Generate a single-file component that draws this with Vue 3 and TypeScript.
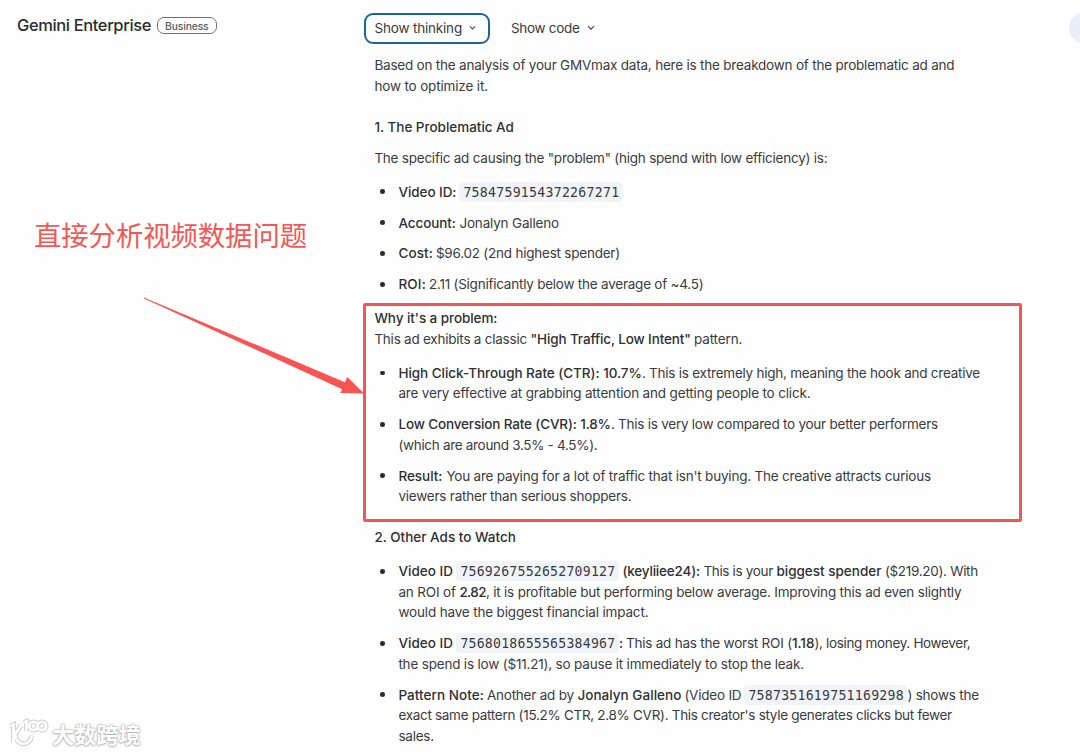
<script setup lang="ts">
import type { Directive } from 'vue'

type Kind = 'text' | 'bold' | 'code'
interface Run { t: string; from: number; to: number; k: Kind }
type Line = Run[]
interface Block { kind: 'para' | 'head' | 'list'; items: Line[][] }

// Runs are placed along the line by their start and end, measured from the column's edge.
const r = (t: string, from: number, to: number, k: Kind = 'text'): Run => ({ t, from, to, k })
const b = (t: string, from: number, to: number): Run => r(t, from, to, 'bold')
const c = (t: string, from: number, to: number): Run => r(t, from, to, 'code')

const gap = (line: Line, i: number, indent: number): string =>
  `${line[i].from - (i === 0 ? indent : line[i - 1].to)}px`

// Tracks the letters of a run so that it fills its measure.
const vFit: Directive<HTMLElement, number> = {
  mounted(el, binding) {
    el.style.letterSpacing = '0px'
    const range = document.createRange()
    range.selectNodeContents(el)
    const natural = range.getBoundingClientRect().width
    const count = (el.textContent ?? '').length
    el.style.letterSpacing = `${(binding.value - natural) / count}px`
  },
}

const blocks: Block[] = [
  { kind: 'para', items: [[
    [r('Based on the analysis of your GMVmax data, here is the breakdown of the problematic ad and', 374, 954)],
    [r('how to optimize it.', 374, 487.5)],
  ]] },
  { kind: 'head', items: [[[b('1. The Problematic Ad', 374, 513.5)]]] },
  { kind: 'para', items: [[[r('The specific ad causing the "problem" (high spend with low efficiency) is:', 374, 827)]]] },
  { kind: 'list', items: [
    [[b('Video ID:', 398, 456), c('7584759154372267271', 459, 622.5)]],
    [[b('Account:', 398, 455.5), r('Jonalyn Galleno', 459, 558.5)]],
    [[b('Cost:', 398, 432.5), r('$96.02 (2nd highest spender)', 435.5, 619.5)]],
    [[b('ROI:', 398, 425.5), r('2.11 (Significantly below the average of ~4.5)', 428.5, 703)]],
  ] },
  { kind: 'para', items: [[
    [b("Why it's a problem:", 374, 497)],
    [r('This ad exhibits a classic', 374, 526.5), b('"High Traffic, Low Intent"', 530, 690.5), r('pattern.', 693.5, 742)],
  ]] },
  { kind: 'list', items: [
    [
      [b('High Click-Through Rate (CTR): 10.7%', 398, 641.5), r('. This is extremely high, meaning the hook and creative', 641.5, 979.5)],
      [r('are very effective at grabbing attention and getting people to click.', 398, 810)],
    ],
    [
      [b('Low Conversion Rate (CVR): 1.8%', 398, 610.5), r('. This is very low compared to your better performers', 610.5, 937.5)],
      [r('(which are around 3.5% - 4.5%).', 398, 597)],
    ],
    [
      [b('Result:', 398, 442), r("You are paying for a lot of traffic that isn't buying. The creative attracts curious", 446, 930.5)],
      [r('viewers rather than serious shoppers.', 398, 631)],
    ],
  ] },
  { kind: 'head', items: [[[b('2. Other Ads to Watch', 374, 515.5)]]] },
  { kind: 'list', items: [
    [
      [b('Video ID', 398, 452.5), c('7569267552652709127', 456, 618.5), b('(keyliiee24):', 622, 699.5), r('This is your', 703, 772.5), b('biggest spender', 776, 881), r('($219.20). With', 884.5, 977.5)],
      [r('an ROI of', 398, 455.5), b('2.82', 459, 485.5), r(', it is profitable but performing below average. Improving this ad even slightly', 485.5, 961)],
      [r('would have the biggest financial impact.', 398, 648)],
    ],
    [
      [b('Video ID', 398, 452.5), c('7568018655565384967', 456, 618.5), b(':', 618.5, 622.5), r('This ad has the worst ROI (', 625.5, 791.5), b('1.18', 791.5, 814), r('), losing money. However,', 814, 970)],
      [r('the spend is low ($11.21), so pause it immediately to stop the leak.', 398, 803.5)],
    ],
    [
      [b('Pattern Note:', 398, 483.5), r('Another ad by', 486.5, 573.5), b('Jonalyn Galleno', 577, 681), r('(Video ID', 684, 741), c('7587351619751169298', 744, 907), r(') shows the', 907, 978.5)],
      [r("exact same pattern (15.2% CTR, 2.8% CVR). This creator's style generates clicks but fewer", 398, 951.5)],
      [r('sales.', 398, 433.5)],
    ],
  ] },
]
</script>

<template>
  <div class="page">
    <aside class="side">
      <div class="brand">
        <span v-fit="134" class="brand-name">Gemini Enterprise</span>
        <span class="badge"><span v-fit="43.5">Business</span></span>
      </div>
    </aside>

    <main class="main">
      <div class="toolbar">
        <button class="toggle active">
          <span v-fit="87.5">Show thinking</span>
          <svg class="chev" viewBox="0 0 8 6"><path d="M1 1.2 4 4.2 7 1.2" /></svg>
        </button>
        <button class="toggle">
          <span v-fit="68.5">Show code</span>
          <svg class="chev" viewBox="0 0 8 6"><path d="M1 1.2 4 4.2 7 1.2" /></svg>
        </button>
      </div>

      <article class="answer">
        <section v-for="(block, bi) in blocks" :key="bi" :class="block.kind">
          <div v-for="(item, ii) in block.items" :key="ii" class="item">
            <div v-for="(line, li) in item" :key="li" class="line">
              <span
                v-for="(run, ri) in line"
                :key="ri"
                :class="['run', run.k]"
                :style="{ width: `${run.to - run.from}px`, marginLeft: gap(line, ri, block.kind === 'list' ? 398 : 374) }"
              ><span v-fit="run.k === 'code' ? run.to - run.from - 7.5 : run.to - run.from">{{ run.t }}</span></span>
            </div>
          </div>
        </section>
      </article>
    </main>

    <div class="avatar"></div>

    <div class="note"><span v-fit="273">直接分析视频数据问题</span></div>
    <div class="frame"></div>
    <svg class="arrow" viewBox="0 0 1080 754">
      <path d="M144 297.4 344.9 382.2 347.4 377 364 393.6 340.2 393 342.2 389.2 144 298.400Z" />
    </svg>

    <div class="watermark">
      <svg class="mark" viewBox="0 0 42 30">
        <g class="mark-shade">
          <path d="M2 8 5.500 6.500V24" /><path d="M13 7.500 10 12A8 8 0 1 0 23.500 17.500" /><path d="M15.500 4.500 18.500 3.500V12.500" />
          <circle cx="25.500" cy="8" r="4.200" /><circle cx="34" cy="8" r="4.200" />
        </g>
        <g class="mark-line">
          <path d="M2 8 5.500 6.500V24" /><path d="M13 7.500 10 12A8 8 0 1 0 23.500 17.500" /><path d="M15.500 4.500 18.500 3.500V12.500" />
          <circle cx="25.500" cy="8" r="4.200" /><circle cx="34" cy="8" r="4.200" />
        </g>
      </svg>
      <span v-fit="89" class="mark-text">大数跨境</span>
    </div>
  </div>
</template>

<style>
html, body { margin: 0; background: #fefefe; }
</style>

<style scoped>
.page {
  position: relative;
  display: flex;
  width: 1080px;
  height: 754px;
  overflow: hidden;
  background: #fefefe;
  color: #3a3b3e;
  font-family: Inter, "Liberation Sans", "Noto Sans CJK SC", sans-serif;
  font-size: 13.5px;
  white-space: nowrap;
}
.side { width: 364px; flex: none; }
.brand { display: flex; align-items: center; gap: 6px; padding: 15px 0 0 17px; height: 21px; }
.brand-name { font-size: 16.500px; font-weight: 500; width: 134px; color: #2b2c2e; margin-top: -2px; }
.badge {
  display: flex; align-items: center; justify-content: center;
  box-sizing: border-box; width: 59.500px; height: 17.500px;
  border: 1px solid #6f7173; border-radius: 7px;
  font-size: 10.300px; font-weight: 500; color: #5a5c5f;
}
.main { width: 660px; flex: none; }
.toolbar { display: flex; gap: 10.500px; padding-top: 12.500px; }
.toggle {
  display: flex; align-items: center; gap: 7px;
  box-sizing: border-box; height: 31px; padding: 0 12px 1px 8.500px;
  border: 2px solid transparent; border-radius: 9px;
  background: none; color: inherit; font: inherit;
}
.toggle.active { border-color: #1a6799; width: 126px; }
.chev { width: 8px; height: 6px; fill: none; stroke: #45474a; stroke-width: 1.200; }
.answer { padding: 11.500px 0 0 10.400px; }
.line { display: flex; align-items: center; height: 20.560px; }
.run { display: block; flex: none; line-height: 20px; }
.bold { font-weight: 550; color: #2e2f32; }
.code {
  box-sizing: border-box; padding-left: 4px; height: 20px; line-height: 21px;
  border-radius: 4px; background: #f0f4f9;
  font-family: "DejaVu Sans Mono", "Liberation Mono", monospace; font-size: 13.200px;
}
.head { margin-top: 20.500px; }
.head + .para { margin-top: 10.300px; }
.list { margin-top: 13.500px; padding-left: 24px; }
.list + .para { margin-top: 13.500px; }
.item { position: relative; }
.item + .item { margin-top: 10.300px; }
.list .item::before {
  content: ""; position: absolute; left: -18px; top: 8px;
  width: 4.600px; height: 4.600px; border-radius: 50%; background: #2b2c2e;
}
.avatar { position: absolute; left: 1069px; top: 12px; width: 32px; height: 32px; border-radius: 50%; background: #e9eef6; }
.note {
  position: absolute; left: 34px; top: 214px; line-height: 40px;
  font-family: "Noto Sans CJK SC", sans-serif; font-size: 27.400px; color: #f25855;
}
.frame {
  position: absolute; left: 363px; top: 303px; box-sizing: border-box;
  width: 659px; height: 219px; border: 3px solid #f25757; border-radius: 2px;
}
.arrow { position: absolute; left: 0; top: 0; width: 1080px; height: 754px; fill: #f75453; pointer-events: none; }
.watermark { position: absolute; left: 8px; top: 717px; display: flex; align-items: center; height: 32px; }
.mark { width: 42px; height: 30px; margin-right: 2px; fill: none; overflow: visible; }
.mark-shade { stroke: #cacaca; stroke-width: 4.600; filter: blur(0.6px); }
.mark-line { stroke: #fff; stroke-width: 2.800; }
.mark-text {
  font-family: "Noto Sans CJK SC", sans-serif; font-size: 22px; font-weight: 700; line-height: 32px; color: #fff;
  text-shadow: 0 0 2px #aaa, 0 0 2px #b4b4b4, 0 1px 2px #c8c8c8;
}
</style>
